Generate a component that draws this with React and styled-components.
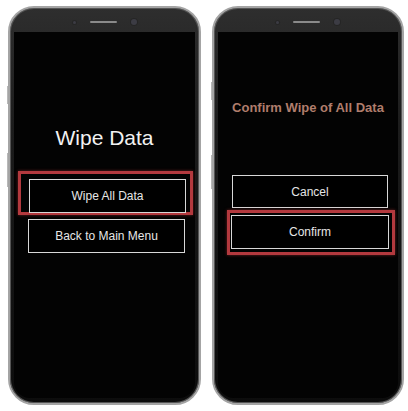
import React from "react";
import styled, { createGlobalStyle } from "styled-components";

const Global = createGlobalStyle`
  html, body { margin: 0; padding: 0; background: #ffffff; }
  body { font-family: "Liberation Sans", Arial, sans-serif; }
`;

const Stage = styled.div`
  display: flex;
  gap: 11px;
  padding: 6px 0 0 8px;
  width: 408px;
  height: 411px;
  box-sizing: border-box;
`;

const Phone = styled.div`
  position: relative;
  width: ${(p) => p.$w}px;
  height: 399px;
  box-sizing: border-box;
  border: 2px solid #a4a4a4;
  border-radius: 26px;
  background: linear-gradient(#2e2e2e, #1c1c1c 30%, #0c0c0c);
  box-shadow: inset 0 0 0 1px #555;
  padding: 0 4px 5px 4px;
  display: flex;
  flex-direction: column;
`;

const SideKey = styled.div`
  position: absolute;
  left: -3px;
  top: ${(p) => p.$top}px;
  width: 1px;
  height: ${(p) => p.$h}px;
  background: #b8b8b8;
`;

const TopBezel = styled.div`
  height: 24px;
  box-sizing: border-box;
  padding: 4px 0 0 0;
  display: flex;
  align-items: center;
  justify-content: center;
  gap: 14px;
`;

const Earpiece = styled.div`
  width: 27px;
  height: 2px;
  border-radius: 1px;
  background: #8a8a8a;
`;

const Lens = styled.div`
  width: ${(p) => p.$s}px;
  height: ${(p) => p.$s}px;
  border-radius: 50%;
  background: #3c3c44;
  box-shadow: 0 0 0 1px #262626;
`;

const Screen = styled.div`
  flex: 1;
  background: #030303;
  border-radius: 0 0 16px 16px;
  display: flex;
  flex-direction: column;
  align-items: flex-start;
  padding-top: ${(p) => p.$pt}px;
`;

const Title = styled.div`
  align-self: stretch;
  text-align: center;
  font-size: ${(p) => p.$size}px;
  line-height: ${(p) => p.$lh}px;
  font-weight: ${(p) => (p.$bold ? 700 : 400)};
  color: ${(p) => p.$color};
  margin-bottom: ${(p) => p.$mb}px;
`;

const Highlight = styled.div`
  box-sizing: border-box;
  border: 3px solid #b3393e;
  box-shadow: 0 0 3px rgba(190, 60, 60, 0.55);
  width: ${(p) => p.$w}px;
  height: ${(p) => p.$h}px;
  margin-left: ${(p) => p.$ml}px;
  margin-top: ${(p) => p.$mt || 0}px;
  padding: ${(p) => p.$pad};
`;

const MenuButton = styled.div`
  box-sizing: border-box;
  width: ${(p) => p.$w}px;
  height: ${(p) => p.$h}px;
  margin-left: ${(p) => p.$ml || 0}px;
  margin-top: ${(p) => p.$mt || 0}px;
  border: 1px solid #d8d8d8;
  background: #000;
  color: #e6e6e6;
  font-size: 12px;
  display: flex;
  align-items: center;
  justify-content: center;
`;

function Handset({ width, keys, children, pt }) {
  return (
    <Phone $w={width}>
      {keys.map(([top, h]) => (
        <SideKey key={top} $top={top} $h={h} />
      ))}
      <TopBezel>
        <Lens $s={3} />
        <Earpiece />
        <Lens $s={6} />
      </TopBezel>
      <Screen $pt={pt}>{children}</Screen>
    </Phone>
  );
}

export default function App() {
  return (
    <>
      <Global />
      <Stage>
        <Handset width={193} pt={94} keys={[[78, 18], [145, 34]]}>
          <Title $size={21} $lh={24} $color="#f2f2f2" $mb={21}>
            Wipe Data
          </Title>
          <Highlight $w={175} $h={44} $ml={4} $pad="5px 0 0 8px">
            <MenuButton $w={157} $h={34}>Wipe All Data</MenuButton>
          </Highlight>
          <MenuButton $w={157} $h={34} $ml={14} $mt={4}>
            Back to Main Menu
          </MenuButton>
        </Handset>
        <Handset width={192} pt={68} keys={[[74, 18], [147, 34]]}>
          <Title $size={13} $lh={16} $bold $color="#b07d6c" $mb={59}>
            Confirm Wipe of All Data
          </Title>
          <MenuButton $w={156} $h={33} $ml={14}>
            Cancel
          </MenuButton>
          <Highlight $w={168} $h={45} $ml={9} $mt={2} $pad="2px 0 0 1px">
            <MenuButton $w={158} $h={34}>Confirm</MenuButton>
          </Highlight>
        </Handset>
      </Stage>
    </>
  );
}
